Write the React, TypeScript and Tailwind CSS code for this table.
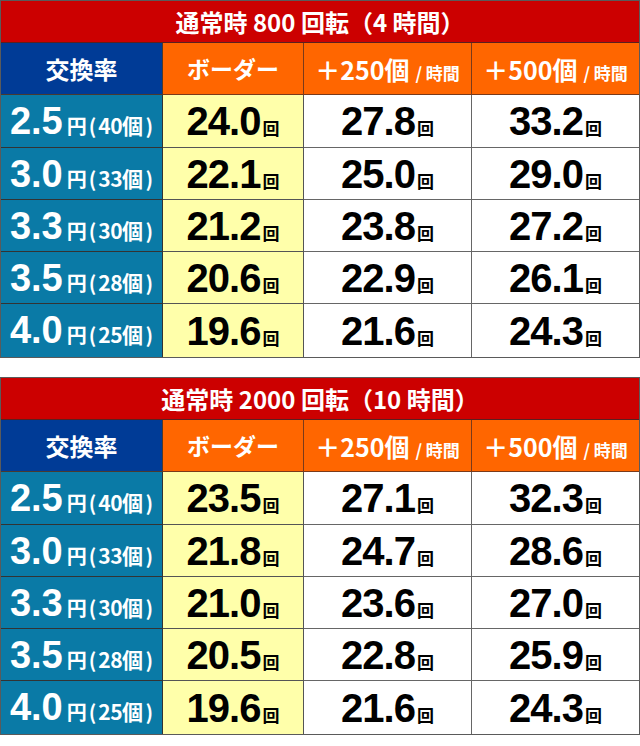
import React from "react";

type Row = [string, string, string, string, string];

const table1: Row[] = [
  ["2.5", "40", "24.0", "27.8", "33.2"],
  ["3.0", "33", "22.1", "25.0", "29.0"],
  ["3.3", "30", "21.2", "23.8", "27.2"],
  ["3.5", "28", "20.6", "22.9", "26.1"],
  ["4.0", "25", "19.6", "21.6", "24.3"],
];

const table2: Row[] = [
  ["2.5", "40", "23.5", "27.1", "32.3"],
  ["3.0", "33", "21.8", "24.7", "28.6"],
  ["3.3", "30", "21.0", "23.6", "27.0"],
  ["3.5", "28", "20.5", "22.8", "25.9"],
  ["4.0", "25", "19.6", "21.6", "24.3"],
];

const rowHeights = ["h-[53px]", "h-[52px]", "h-[52px]", "h-[52px]", "h-[53px]"];

function Count({ value }: { value: string }) {
  return (
    <span className="flex items-baseline text-black">
      <span className="font-['Liberation_Sans',Arial,sans-serif] text-[40px] font-bold tracking-[-1px] leading-none">
        {value}
      </span>
      <span className="ml-[2px] text-[17px] font-bold leading-none">回</span>
    </span>
  );
}

function Table({ title, rows }: { title: string; rows: Row[] }) {
  return (
    <div className="border border-[#5a5a5a]">
      {/* Title */}
      <div className="h-[42px] bg-[#cc0000] border-b border-[#5a2020] flex items-center justify-center text-white text-[24px] font-bold">
        {title}
      </div>

      <div className="grid grid-cols-[162px_141px_168px_167px]">
        {/* Header */}
        <div className="h-[52px] bg-[#003b96] border-r border-b border-[#4a3a30] flex items-center justify-center text-white text-[24px] font-bold">
          交換率
        </div>
        <div className="h-[52px] bg-[#ff6600] border-r border-b border-[#7a3a1a] flex items-center justify-center text-white text-[23px] font-bold">
          ボーダー
        </div>
        {["＋250個", "＋500個"].map((h, i) => (
          <div
            key={h}
            className={`h-[52px] bg-[#ff6600] border-b border-[#7a3a1a] flex items-baseline justify-center pt-[8px] text-white font-bold ${
              i === 0 ? "border-r" : ""
            }`}
          >
            <span className="text-[25px] leading-[36px]">{h}</span>
            <span className="ml-[6px] text-[17px]">/ 時間</span>
          </div>
        ))}

        {/* Rows */}
        {rows.map((r, idx) => {
          const last = idx === rows.length - 1;
          return (
            <React.Fragment key={r[0]}>
              <div
                className={`${rowHeights[idx]} bg-[#0a7aa6] border-r border-[#333] ${
                  last ? "" : "border-b"
                } flex items-baseline justify-center pt-[6px] text-white font-bold`}
              >
                <span className="font-['Liberation_Sans',Arial,sans-serif] text-[38px] leading-[40px]">
                  {r[0]}
                </span>
                <span className="ml-[4px] text-[20px]">円</span>
                <span className="mx-[2px] text-[20px]">(</span>
                <span className="text-[21px] tracking-[-0.5px]">{r[1]}個</span>
                <span className="ml-[3px] text-[20px]">)</span>
              </div>
              <div
                className={`${rowHeights[idx]} bg-[#ffffaa] border-r border-[#555] ${
                  last ? "" : "border-b"
                } flex items-center justify-center`}
              >
                <Count value={r[2]} />
              </div>
              <div
                className={`${rowHeights[idx]} bg-white border-r border-[#666] ${
                  last ? "" : "border-b"
                } flex items-center justify-center`}
              >
                <Count value={r[3]} />
              </div>
              <div
                className={`${rowHeights[idx]} bg-white border-[#666] ${
                  last ? "" : "border-b"
                } flex items-center justify-center`}
              >
                <Count value={r[4]} />
              </div>
            </React.Fragment>
          );
        })}
      </div>
    </div>
  );
}

export default function App() {
  return (
    <div className="w-[640px] h-[746px] bg-white flex flex-col gap-[19px] font-['Noto_Sans_CJK_JP','Noto_Sans',sans-serif]">
      <Table title="通常時 800 回転（4 時間）" rows={table1} />
      <Table title="通常時 2000 回転（10 時間）" rows={table2} />
    </div>
  );
}
